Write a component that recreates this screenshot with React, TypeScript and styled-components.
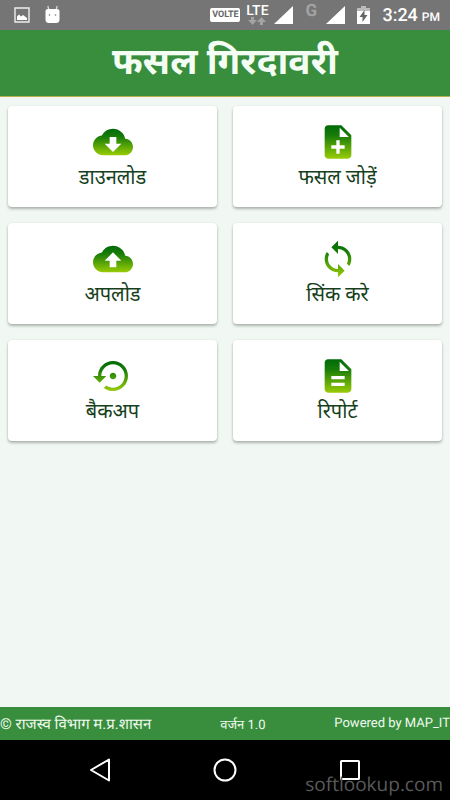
import React from "react";
import styled, { createGlobalStyle } from "styled-components";

const GlobalStyle = createGlobalStyle`
  * { box-sizing: border-box; }
  body {
    margin: 0;
    background: #f1f8f3;
    font-family: Roboto, "Noto Sans", "Noto Sans Devanagari", sans-serif;
    text-rendering: geometricPrecision;
  }
  button { font: inherit; border: 0; padding: 0; cursor: pointer; }
`;

const Screen = styled.div`
  display: flex;
  flex-direction: column;
  min-height: 100vh;
  background: #f1f8f3;
`;

const StatusBar = styled.div`
  display: flex;
  align-items: center;
  justify-content: space-between;
  height: 30px;
  padding: 0 10px 0 14px;
  background: #757575;
  color: #fff;
`;

const StatusGroup = styled.div<{ $gap: number }>`
  display: flex;
  align-items: center;
  gap: ${(p) => p.$gap}px;
`;

const VolteBadge = styled.span`
  width: 30px;
  height: 14px;
  border-radius: 2px;
  background: #fff;
  color: #666;
  font-size: 9px;
  font-weight: 700;
  line-height: 15px;
  text-align: center;
`;

const Network = styled.div`
  display: flex;
  flex-direction: column;
  align-items: center;
  width: 22px;
  font-size: 14px;
  font-weight: 500;
  line-height: 12px;
`;

const Roaming = styled.span`
  width: 12px;
  padding-bottom: 8px;
  color: #a3a3a3;
  font-size: 17px;
  font-weight: 700;
  line-height: 16px;
`;

const Clock = styled.time`
  font-size: 18px;
  font-weight: 500;
  line-height: 30px;
  padding-top: 2px;
  white-space: nowrap;
`;

const Meridiem = styled.span`
  margin-left: 4px;
  font-size: 12px;
`;

const Header = styled.header`
  display: flex;
  align-items: center;
  justify-content: center;
  height: 67px;
  background: #388e3c;
  border-bottom: 1px solid #b5b04c;
`;

const Title = styled.h1`
  margin: 0;
  color: #f3fdf3;
  font-size: 37px;
  font-weight: 700;
  line-height: 60px;
  white-space: nowrap;
`;

const Main = styled.main`
  flex: 1;
  padding: 9px 8px;
`;

const Grid = styled.div`
  display: grid;
  grid-template-columns: 1fr 1fr;
  gap: 16px;
`;

const Card = styled.button`
  display: flex;
  flex-direction: column;
  align-items: center;
  height: 101px;
  padding-top: 16px;
  border-radius: 4px;
  background: #fff;
  box-shadow: 0 2px 3px rgba(0, 0, 0, 0.28), 0 0 2px rgba(0, 0, 0, 0.08);
`;

const CardLabel = styled.span`
  color: #163f1c;
  font-size: 20px;
  line-height: 30px;
  white-space: nowrap;
`;

const Footer = styled.footer`
  display: flex;
  align-items: center;
  justify-content: space-between;
  height: 33px;
  background: #388e3c;
  color: #f1faf1;
  font-size: 13px;
  white-space: nowrap;
`;

const Owner = styled.span`
  font-size: 15px;
`;

const NavBar = styled.nav`
  position: relative;
  display: grid;
  grid-template-columns: repeat(3, 1fr);
  height: 60px;
  padding: 0 37px;
  background: #000;
`;

const NavButton = styled.button`
  display: flex;
  align-items: center;
  justify-content: center;
  background: transparent;
`;

const Watermark = styled.span`
  position: absolute;
  right: 7px;
  bottom: 4px;
  color: #5a5a5a;
  font-family: "Open Sans", sans-serif;
  font-size: 19px;
  line-height: 24px;
`;

const icons = {
  download:
    "M19.35 10.04C18.67 6.59 15.64 4 12 4 9.11 4 6.6 5.64 5.35 8.04 2.34 8.36 0 10.91 0 14c0 3.31 2.69 6 6 6h13c2.76 0 5-2.24 5-5 0-2.64-2.05-4.78-4.65-4.96zM17 13l-5 5-5-5h3V9h4v4h3z",
  upload:
    "M19.35 10.04C18.67 6.59 15.64 4 12 4 9.11 4 6.6 5.64 5.35 8.04 2.34 8.36 0 10.91 0 14c0 3.31 2.69 6 6 6h13c2.76 0 5-2.24 5-5 0-2.64-2.05-4.78-4.65-4.96zM14 13v4h-4v-4H7l5-5 5 5h-3z",
  add: "M14 2H6c-1.1 0-1.99.9-1.99 2L4 20c0 1.1.89 2 1.99 2H18c1.1 0 2-.9 2-2V8l-6-6zm2 14h-3v3h-2v-3H8v-2h3v-3h2v3h3v2zm-3-7V3.5L18.5 9H13z",
  sync: "M12 4V1L8 5l4 4V6c3.31 0 6 2.69 6 6 0 1.01-.25 1.97-.7 2.8l1.46 1.46C19.54 15.03 20 13.57 20 12c0-4.42-3.58-8-8-8zm0 14c-3.31 0-6-2.69-6-6 0-1.01.25-1.97.7-2.8L5.24 7.74C4.46 8.97 4 10.43 4 12c0 4.42 3.58 8 8 8v3l4-4-4-4v3z",
  backup:
    "M14 12c0-1.1-.9-2-2-2s-2 .9-2 2 .9 2 2 2 2-.9 2-2zm-2-9c-4.97 0-9 4.03-9 9H0l4 4 4-4H5c0-3.87 3.13-7 7-7s7 3.13 7 7-3.13 7-7 7c-1.51 0-2.91-.49-4.06-1.3l-1.42 1.44C8.04 20.3 9.94 21 12 21c4.97 0 9-4.03 9-9s-4.03-9-9-9z",
  report:
    "M14 2H6c-1.1 0-1.99.9-1.99 2L4 20c0 1.1.89 2 1.99 2H18c1.1 0 2-.9 2-2V8l-6-6zm2 16H8v-2h8v2zm0-4H8v-2h8v2zm-3-5V3.5L18.5 9H13z",
};

type IconName = keyof typeof icons;

const items: { icon: IconName; label: string }[] = [
  { icon: "download", label: "डाउनलोड" },
  { icon: "add", label: "फसल जोड़ें" },
  { icon: "upload", label: "अपलोड" },
  { icon: "sync", label: "सिंक करे" },
  { icon: "backup", label: "बैकअप" },
  { icon: "report", label: "रिपोर्ट" },
];

function CardIcon({ name }: { name: IconName }) {
  const id = `leaf-${name}`;
  return (
    <svg width="40" height="40" viewBox="0 0 24 24" aria-hidden="true">
      <defs>
        <linearGradient id={id} x1="0" y1="0" x2="0" y2="1">
          <stop offset="0" stopColor="#006a08" />
          <stop offset="0.3" stopColor="#177c08" />
          <stop offset="1" stopColor="#99cc05" />
        </linearGradient>
      </defs>
      <path d={icons[name]} fill={`url(#${id})`} />
    </svg>
  );
}

function Signal() {
  return (
    <svg width="19" height="18" viewBox="0 0 19 18" aria-hidden="true">
      <path d="M19 0v18H0z" fill="#fff" />
    </svg>
  );
}

export default function App() {
  return (
    <Screen>
      <GlobalStyle />
      <StatusBar>
        <StatusGroup $gap={14}>
          <svg width="16" height="16" viewBox="0 0 16 16" aria-hidden="true">
            <path d="M1 1h14v14H1z" fill="none" stroke="#eee" strokeWidth="1.4" />
            <path d="M3 13V9.500l2-2 2 2 2-1.500 4 3V13z" fill="#fff" />
          </svg>
          <svg width="17" height="20" viewBox="0 0 17 20" aria-hidden="true">
            <path d="M5 5 3.800 1M12 5l1.200-4" stroke="#ddd" strokeWidth="1.200" />
            <path
              d="M3.500 4h10c1 0 2 1 2 2v8c0 3-1 4-4 4h-6c-3 0-4-1-4-4V6c0-1 1-2 2-2z"
              fill="#fff"
            />
            <circle cx="5.500" cy="10" r="0.800" fill="#777" />
            <circle cx="11.500" cy="10" r="0.800" fill="#777" />
          </svg>
        </StatusGroup>
        <StatusGroup $gap={12}>
          <StatusGroup $gap={6}>
            <VolteBadge>VOLTE</VolteBadge>
            <Network>
              LTE
              <svg width="18" height="8" viewBox="0 0 18 8" aria-hidden="true">
                <path
                  d="M3 0h3v3h3L4.500 8 0 3h3zM12 8h3V5h3l-4.500-5L9 5h3z"
                  fill="#a3a3a3"
                />
              </svg>
            </Network>
            <Signal />
          </StatusGroup>
          <StatusGroup $gap={9}>
            <Roaming>G</Roaming>
            <Signal />
          </StatusGroup>
          <svg width="13" height="18" viewBox="0 0 13 18" aria-hidden="true">
            <path d="M4 0h5v2h4v16H0V2h4z" fill="#bbb" />
            <path d="M0 5h13v13H0z" fill="#fff" />
            <path d="M7.500 4 2.500 11h3v5l5-7h-3z" fill="#666" />
          </svg>
          <Clock>
            3:24<Meridiem>PM</Meridiem>
          </Clock>
        </StatusGroup>
      </StatusBar>
      <Header>
        <Title>फसल गिरदावरी</Title>
      </Header>
      <Main>
        <Grid>
          {items.map((item) => (
            <Card key={item.icon} type="button">
              <CardIcon name={item.icon} />
              <CardLabel>{item.label}</CardLabel>
            </Card>
          ))}
        </Grid>
      </Main>
      <Footer>
        <Owner>© राजस्व विभाग म.प्र.शासन</Owner>
        <span>वर्जन 1.0</span>
        <span>Powered by MAP_IT</span>
      </Footer>
      <NavBar>
        <NavButton type="button" aria-label="Back">
          <svg width="24" height="26" viewBox="0 0 24 26" aria-hidden="true">
            <path
              d="M21 2.500v21L3 13z"
              fill="none"
              stroke="#fff"
              strokeWidth="2"
              strokeLinejoin="round"
            />
          </svg>
        </NavButton>
        <NavButton type="button" aria-label="Home">
          <svg width="26" height="26" viewBox="0 0 26 26" aria-hidden="true">
            <circle cx="13" cy="13" r="10.500" fill="none" stroke="#fff" strokeWidth="2" />
          </svg>
        </NavButton>
        <NavButton type="button" aria-label="Recent apps">
          <svg width="22" height="22" viewBox="0 0 22 22" aria-hidden="true">
            <rect x="2" y="2" width="18" height="18" rx="0.500" fill="none" stroke="#fff" strokeWidth="2" />
          </svg>
        </NavButton>
        <Watermark>softlookup.com</Watermark>
      </NavBar>
    </Screen>
  );
}
